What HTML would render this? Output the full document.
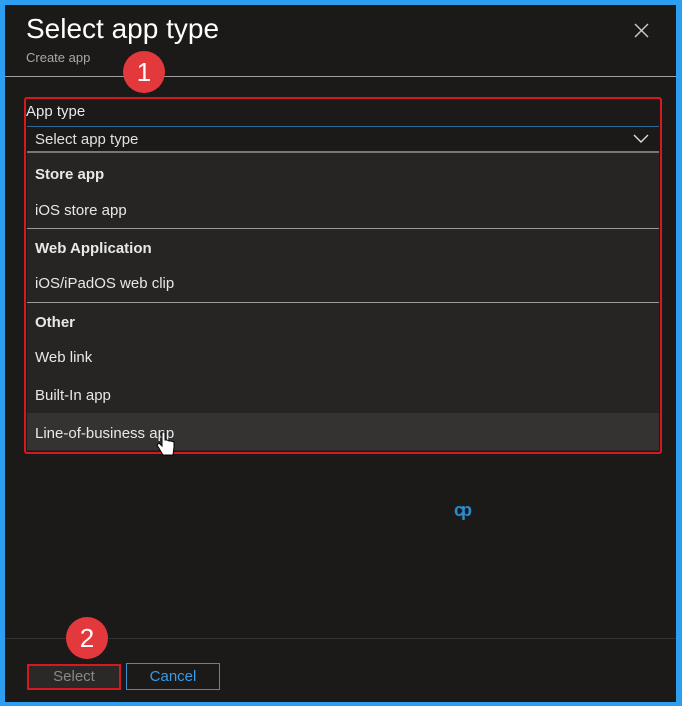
<!DOCTYPE html>
<html><head><style>
body{margin:0;width:682px;height:706px;background:#2d9ff0;position:relative;overflow:hidden;font-family:"Liberation Sans",sans-serif;}
.p{position:absolute;left:5px;top:5px;width:671px;height:697px;background:#1b1a19;}
.a{position:absolute;}
.t{color:#fff;}
.it{position:absolute;left:35px;color:#e8e8e8;font-size:15px;}
.h{font-weight:bold;}
.badge{position:absolute;border-radius:50%;background:#e3393c;color:#fff;font-size:26px;text-align:center;}
</style></head><body>
<div class="p"></div>
<div class="a t" style="left:26px;top:13px;font-size:28px;font-weight:500;">Select app type</div>
<div class="a" style="left:26px;top:50px;font-size:13px;color:#a8a8a8;">Create app</div>
<svg class="a" style="left:634px;top:23px" width="15" height="15"><path d="M1 1L14 14M14 1L1 14" stroke="#ccc" stroke-width="1.4"/></svg>
<div class="a" style="left:5px;top:76px;width:671px;height:1px;background:#a0a0a0;"></div>
<div class="a" style="left:24px;top:97px;width:634px;height:353px;border:2px solid #d51a1f;border-radius:3px;"></div>
<div class="a" style="left:26px;top:103px;font-size:15px;color:#e8e8e8;">App type</div>
<div class="a" style="left:27px;top:126px;width:632px;height:24px;border-top:1px solid #2c6a9a;background:#1b1a19;"></div>
<div class="a" style="left:35px;top:131px;font-size:15px;color:#e0e0e0;">Select app type</div>
<svg class="a" style="left:633px;top:134px" width="16" height="10"><path d="M1 1L8 8L15 1" stroke="#ddd" stroke-width="1.4" fill="none"/></svg>
<div class="a" style="left:27px;top:151px;width:632px;height:298px;background:#262524;border-top:2px solid #777;"></div>
<div class="a" style="left:27px;top:413px;width:632px;height:37px;background:#353332;"></div>
<div class="a" style="left:27px;top:228px;width:632px;height:1px;background:#9a9a9a;"></div>
<div class="a" style="left:27px;top:302px;width:632px;height:1px;background:#9a9a9a;"></div>
<div class="it h" style="top:166px">Store app</div>
<div class="it" style="top:202px">iOS store app</div>
<div class="it h" style="top:240px">Web Application</div>
<div class="it" style="top:275px">iOS/iPadOS web clip</div>
<div class="it h" style="top:314px">Other</div>
<div class="it" style="top:349px">Web link</div>
<div class="it" style="top:387px">Built-In app</div>
<div class="it" style="top:425px">Line-of-business app</div>
<svg class="a" style="left:156px;top:430px" width="20" height="30"><path d="M6 2v14l-3-3-2 2 6 10h10l1-8v-5l-3-1-2 0-2-1-2 0V2z" fill="#fff" stroke="#000" stroke-width="1"/></svg>
<div class="a" style="left:454px;top:500px;width:38px;height:20px;color:#2a8bd0;font-size:18px;font-weight:bold;letter-spacing:-3px">cp</div>
<div class="a" style="left:5px;top:638px;width:671px;height:1px;background:#333;"></div>
<div class="a" style="left:27px;top:664px;width:90px;height:22px;border:2px solid #d51a1f;background:#2a2928;color:#888;font-size:15px;text-align:center;line-height:22px;">Select</div>
<div class="a" style="left:126px;top:663px;width:92px;height:25px;border:1px solid #3a8fd0;color:#3a9ae6;font-size:15px;text-align:center;line-height:25px;">Cancel</div>
<div class="badge" style="left:123px;top:51px;width:42px;height:42px;line-height:42px;">1</div>
<div class="badge" style="left:66px;top:617px;width:42px;height:42px;line-height:42px;">2</div>
</body></html>
